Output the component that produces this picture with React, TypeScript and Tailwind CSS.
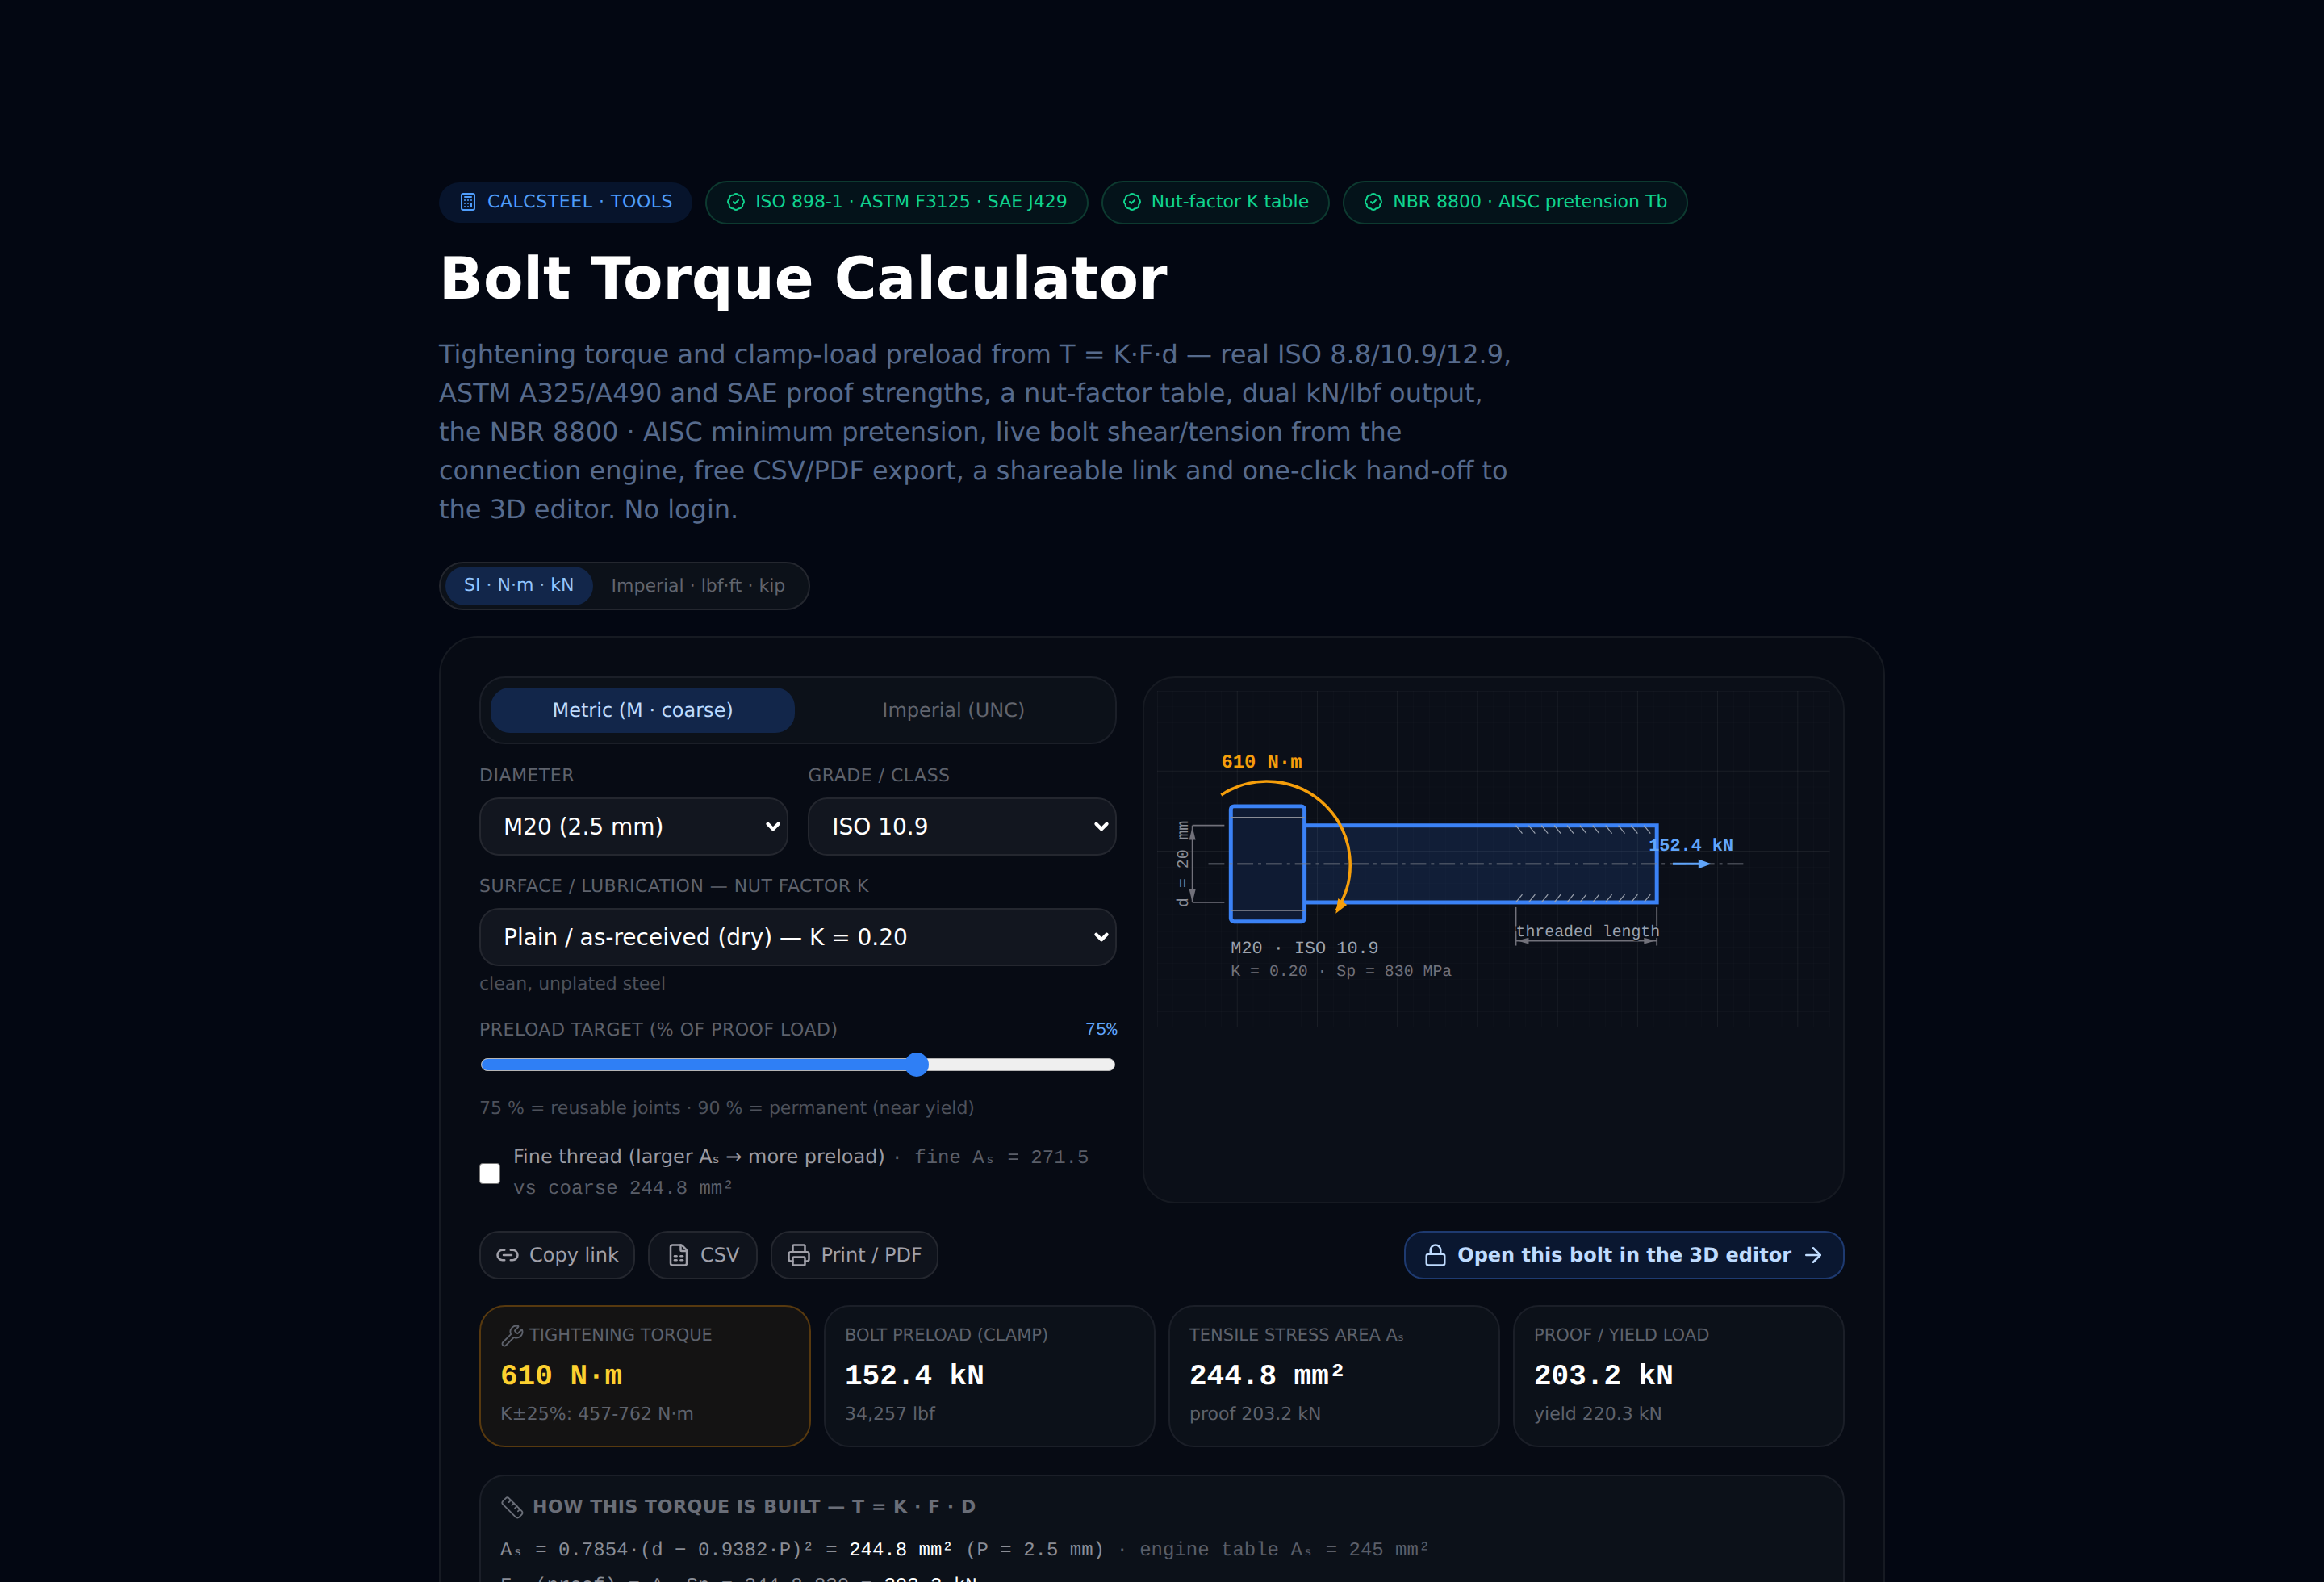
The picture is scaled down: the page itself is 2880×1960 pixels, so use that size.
import { Calculator, BadgeCheck, Link2, FileSpreadsheet, Printer, Lock, ArrowRight, Wrench, Ruler, ChevronDown } from 'lucide-react'

const MONO = 'font-["Liberation_Mono",monospace]'

function Badge({ text }: { text: string }) {
  return (
    <span className="flex items-center gap-3 h-[54px] px-6 pb-[2px] rounded-full border-2 border-[#0d3a30] bg-[#04131a] text-[22px] text-[#10d48e]">
      <BadgeCheck className="w-6 h-6" strokeWidth={2} />
      {text}
    </span>
  )
}

function Field({ label, value }: { label: string; value: string }) {
  return (
    <div>
      <div className="text-[22px] leading-[32px] uppercase tracking-[0.5px] text-[#5e626c] mb-[10px]">{label}</div>
      <div className="relative">
        <select className="appearance-none w-full h-[72px] px-[28px] pt-[2px] rounded-[24px] border-2 border-[#24272f] bg-[#12161f] text-[28px] text-white outline-none">
          <option>{value}</option>
        </select>
        <ChevronDown className="absolute right-[6px] top-[23px] w-[26px] h-[26px] text-white pointer-events-none" strokeWidth={4} />
      </div>
    </div>
  )
}

function BoltDiagram() {
  const hatch = [224, 232, 240, 248, 256, 264, 272, 280, 288, 296, 304]
  const gridV = Array.from({ length: 43 }, (_, i) => i * 10)
  const gridH = Array.from({ length: 22 }, (_, i) => i * 10)
  return (
    <svg viewBox="0 0 420 210" className={'block w-full ' + MONO}>
      {gridV.map((x) => (
        <line key={x} x1={x} y1={0} x2={x} y2={210} stroke="#ffffff" strokeOpacity={x % 50 === 0 ? 0.07 : 0.025} strokeWidth={0.5} />
      ))}
      {gridH.map((y) => (
        <line key={y} x1={0} y1={y} x2={420} y2={y} stroke="#ffffff" strokeOpacity={y % 50 === 0 ? 0.07 : 0.025} strokeWidth={0.5} />
      ))}
      <rect x={92} y={84} width={220} height={48} fill="#3b82f6" fillOpacity={0.14} stroke="#3b82f6" strokeWidth={2.5} />
      <rect x={46} y={72} width={46} height={72} rx={2} fill="#0f1b33" stroke="#3b82f6" strokeWidth={2.5} />
      <line x1={46} y1={79} x2={92} y2={79} stroke="#8a8d96" strokeWidth={0.8} />
      <line x1={46} y1={137} x2={92} y2={137} stroke="#8a8d96" strokeWidth={0.8} />
      <line x1={32} y1={108} x2={366} y2={108} stroke="#7b7f88" strokeWidth={0.8} strokeDasharray="10 3 2 3" />
      {hatch.map((x) => (
        <g key={x} stroke="#9ca3af" strokeWidth={0.6}>
          <line x1={x} y1={84} x2={x + 4} y2={89} />
          <line x1={x} y1={132} x2={x + 4} y2={127} />
        </g>
      ))}
      <g stroke="#71717a" strokeWidth={0.9}>
        <line x1={22} y1={84} x2={42} y2={84} />
        <line x1={22} y1={132} x2={42} y2={132} />
        <line x1={22} y1={84} x2={22} y2={132} />
        <line x1={224} y1={135} x2={224} y2={159} />
        <line x1={312} y1={135} x2={312} y2={159} />
        <line x1={224} y1={156} x2={312} y2={156} />
      </g>
      <polygon points="22,85 20,93 24,93" fill="#71717a" />
      <polygon points="22,132 20,124 24,124" fill="#71717a" />
      <polygon points="225,156 232,154 232,158" fill="#71717a" />
      <polygon points="311,156 304,154 304,158" fill="#71717a" />
      <text x={19} y={108} transform="rotate(-90 19 108)" textAnchor="middle" fontSize={10} fill="#8a8d96">d = 20 mm</text>
      <path d="M40 65 A52 52 0 0 1 112 137" fill="none" stroke="#f59e0b" strokeWidth={1.8} />
      <polygon points="111.5,139 113,129.5 118.5,133.5" fill="#f59e0b" />
      <text x={40} y={48} fontSize={12} fontWeight={700} fill="#f59e0b">610 N·m</text>
      <line x1={322} y1={108} x2={340} y2={108} stroke="#60a5fa" strokeWidth={1.5} />
      <polygon points="338,105 346,108 338,111" fill="#60a5fa" />
      <text x={307} y={100} fontSize={11} fontWeight={700} fill="#60a5fa">152.4 kN</text>
      <text x={224} y={153} fontSize={10} fill="#9ca3af" stroke="#0b0f18" strokeWidth={2} paintOrder="stroke">threaded length</text>
      <text x={46} y={164} fontSize={11} fill="#9ca3af">M20 · ISO 10.9</text>
      <text x={46} y={178} fontSize={10} fill="#71717a">K = 0.20 · Sp = 830 MPa</text>
    </svg>
  )
}

function Stat({ label, value, sub, hot, icon }: { label: string; value: string; sub: string; hot?: boolean; icon?: boolean }) {
  return (
    <div className={'h-[176px] rounded-[32px] border-2 px-[24px] pt-[20px] ' + (hot ? 'border-[#57390f] bg-[#141313]' : 'border-[#1b1f28] bg-[#0c1119]')}>
      <div className="flex items-center gap-[6px] h-[32px] text-[21px] uppercase text-[#5e626c]">
        {icon && <Wrench className="w-[30px] h-[30px]" strokeWidth={1.5} />}
        {label}
      </div>
      <div className={MONO + ' mt-[12px] h-[46px] leading-[46px] text-[36px] font-bold ' + (hot ? 'text-[#fcd02f]' : 'text-white')}>{value}</div>
      <div className="mt-[7px] text-[22px] text-[#5e626c]">{sub}</div>
    </div>
  )
}

export default function App() {
  return (
    <div className="h-[1960px] overflow-hidden bg-[#030712] font-['DejaVu_Sans',sans-serif] [text-rendering:geometricPrecision]">
      <div className="w-[1792px] mx-auto pt-[224px]">
        <div className="flex items-center gap-[16px]">
          <span className="flex items-center gap-3 h-[50px] px-6 pb-[2px] rounded-full bg-[#07142c] text-[22px] tracking-[0.55px] text-[#4f9dfb]">
            <Calculator className="w-6 h-6" strokeWidth={2} />
            CALCSTEEL · TOOLS
          </span>
          <Badge text="ISO 898-1 · ASTM F3125 · SAE J429" />
          <Badge text="Nut-factor K table" />
          <Badge text="NBR 8800 · AISC pretension Tb" />
        </div>

        <h1 className="mt-[27px] text-[72px] leading-[80px] font-bold text-white">Bolt Torque Calculator</h1>

        <p className="mt-[30px] w-[1344px] text-[32px] leading-[48px] text-[#566a8c]">
          Tightening torque and clamp-load preload from T = K·F·d — real ISO 8.8/10.9/12.9, ASTM A325/A490 and SAE proof strengths, a nut-factor table, dual kN/lbf output, the NBR 8800 · AISC minimum pretension, live bolt shear/tension from the connection engine, free CSV/PDF export, a shareable link and one-click hand-off to the 3D editor. No login.
        </p>

        <div className="mt-[41px] flex w-fit items-center h-[60px] p-[6px] rounded-full border-2 border-[#24272f] bg-[#0c1119] text-[22px]">
          <span className="h-[48px] leading-[48px] px-[23px] rounded-full bg-[#12264a] text-[#93c5fd]">SI · N·m · kN</span>
          <span className="px-[23px] text-[#62656e]">Imperial · lbf·ft · kip</span>
        </div>

        <div className="mt-[32px] rounded-[48px] border-2 border-[#161a22] bg-[#070b14] p-[48px]">
          <div className="grid grid-cols-[1fr_1.1fr] gap-[32px]">
            <div>
              <div className="grid grid-cols-2 gap-[8px] p-[12px] rounded-[32px] border-2 border-[#1b1f28] bg-[#0c1119] text-[24px]">
                <div className="h-[56px] leading-[56px] text-center rounded-[24px] bg-[#12264a] text-[#bfdbfe]">Metric (M · coarse)</div>
                <div className="h-[56px] leading-[56px] text-center text-[#62656e]">Imperial (UNC)</div>
              </div>
              <div className="mt-[24px] grid grid-cols-2 gap-[24px]">
                <Field label="Diameter" value="M20 (2.5 mm)" />
                <Field label="Grade / Class" value="ISO 10.9" />
              </div>
              <div className="mt-[23px]">
                <Field label="Surface / Lubrication — Nut Factor K" value="Plain / as-received (dry) — K = 0.20" />
              </div>
              <div className="mt-[6px] text-[22px] text-[#4d515b]">clean, unplated steel</div>

              <div className="mt-[24px] flex items-center justify-between">
                <span className="text-[22px] uppercase tracking-[0.5px] text-[#5e626c]">Preload target (% of proof load)</span>
                <span className={MONO + ' text-[22px] text-[#60a5fa]'}>75%</span>
              </div>
              <div className="relative mt-[18px] h-[16px] mx-[2px] rounded-full bg-[#efefef] border border-[#b5b5b5]">
                <div className="h-full w-[68.7%] rounded-l-full bg-[#2f7ff5]" />
                <div className="absolute left-[68.7%] top-[-8px] w-[30px] h-[30px] -ml-[15px] rounded-full bg-[#2f7ff5]" />
              </div>
              <div className="mt-[30px] text-[22px] text-[#4d515b]">75 % = reusable joints · 90 % = permanent (near yield)</div>

              <label className="mt-[26px] flex items-center gap-[16px]">
                <span className="shrink-0 w-[26px] h-[26px] rounded-[4px] bg-white border border-[#777]" />
                <span className="text-[24px] leading-[35.5px] text-[#9b9ba3]">
                  Fine thread (larger Aₛ → more preload) <span className={MONO + ' text-[#5a5e68]'}>· fine Aₛ = 271.5 vs coarse 244.8 mm²</span>
                </span>
              </label>
            </div>

            <div className="rounded-[40px] border-2 border-[#161a22] bg-[#0b0f18] p-[16px]">
              <BoltDiagram />
            </div>
          </div>

          <div className="mt-[34px] flex items-center justify-between">
            <div className="flex gap-[16px] text-[24px] text-[#a1a1aa]">
              <span className="flex items-center gap-[12px] h-[60px] px-[18px] rounded-[24px] border-2 border-[#24272f] bg-[#0f131c]"><Link2 className="w-[30px] h-[30px]" />Copy link</span>
              <span className="flex items-center gap-[12px] h-[60px] px-[21px] rounded-[24px] border-2 border-[#24272f] bg-[#0f131c]"><FileSpreadsheet className="w-[30px] h-[30px]" />CSV</span>
              <span className="flex items-center gap-[12px] h-[60px] px-[18px] rounded-[24px] border-2 border-[#24272f] bg-[#0f131c]"><Printer className="w-[30px] h-[30px]" />Print / PDF</span>
            </div>
            <span className="flex items-center gap-[12px] h-[60px] px-[22px] rounded-[24px] border-2 border-[#1e3a70] bg-[#0a1730] text-[24px] font-bold text-[#bfdbfe]">
              <Lock className="w-[30px] h-[30px]" />Open this bolt in the 3D editor<ArrowRight className="w-[30px] h-[30px]" />
            </span>
          </div>

          <div className="mt-[32px] grid grid-cols-4 gap-[16px]">
            <Stat hot icon label="Tightening torque" value="610 N·m" sub="K±25%: 457-762 N·m" />
            <Stat label="Bolt preload (clamp)" value="152.4 kN" sub="34,257 lbf" />
            <Stat label="Tensile stress area Aₛ" value="244.8 mm²" sub="proof 203.2 kN" />
            <Stat label="Proof / yield load" value="203.2 kN" sub="yield 220.3 kN" />
          </div>

          <div className="mt-[34px] rounded-[32px] border-2 border-[#1b1f28] bg-[#0c1119] px-[24px] pt-[22px] pb-[24px]">
            <div className="flex items-center gap-[10px] text-[22px] tracking-[0.55px] font-bold uppercase text-[#6a6e78]">
              <Ruler className="w-[30px] h-[30px]" strokeWidth={1.5} />
              How this torque is built — T = K · F · D
            </div>
            <div className={MONO + ' mt-[16px] text-[24px] leading-[44px] text-[#8a8d96]'}>
              <div>Aₛ = 0.7854·(d − 0.9382·P)² = <span className="text-white">244.8 mm²</span> (P = 2.5 mm) <span className="text-[#5a5e68]">· engine table Aₛ = 245 mm²</span></div>
              <div>Fₚ (proof) = Aₛ·Sp = 244.8·830 = <span className="text-white">203.2 kN</span></div>
            </div>
          </div>
        </div>
      </div>
    </div>
  )
}
